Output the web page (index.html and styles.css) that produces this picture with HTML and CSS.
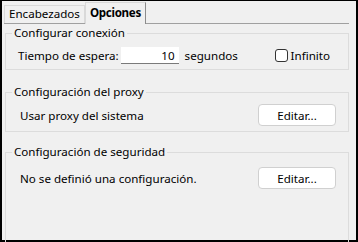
FILE: index.html
```html
<!DOCTYPE html>
<html lang="es">
<head>
    <meta charset="UTF-8">
    <title>Opciones</title>
    <link rel="stylesheet" href="styles.css">
</head>
<body>
    <div class="window">
        <div class="tabs">
            <div class="tab">Encabezados</div>
            <div class="tab active">Opciones</div>
        </div>

        <div class="panel">
            <fieldset class="group group-conn">
                <legend>Configurar conexión</legend>
                <div class="row">
                    <label for="timeout">Tiempo de espera:</label>
                    <input type="text" id="timeout" class="num" value="10">
                    <span class="unit">segundos</span>
                    <label class="check">
                        <span class="box"></span>
                        Infinito
                    </label>
                </div>
            </fieldset>

            <fieldset class="group group-proxy">
                <legend>Configuración del proxy</legend>
                <div class="row">
                    <span class="text">Usar proxy del sistema</span>
                    <button class="btn">Editar...</button>
                </div>
            </fieldset>

            <fieldset class="group group-sec">
                <legend>Configuración de seguridad</legend>
                <div class="row">
                    <span class="text">No se definió una configuración.</span>
                    <button class="btn">Editar...</button>
                </div>
            </fieldset>
        </div>
    </div>
</body>
</html>
```

FILE: styles.css
```css
* {
    margin: 0;
    padding: 0;
    box-sizing: border-box;
}

body {
    font-family: "Noto Sans", "Open Sans", sans-serif;
    font-size: 11.6px;
    color: #000;
    background: #000;
}

.window {
    width: 358px;
    height: 242px;
    background: #f0f0f0;
    border-top: 1px solid #000;
    border-left: 2px solid #000;
    border-right: 2px solid #000;
    border-bottom: 2px solid #000;
    padding: 2px 7px 0 2px;
}

/* tab strip */
.tabs {
    display: flex;
    align-items: flex-end;
    height: 21px;
    border-bottom: 1px solid #a0a0a0;
}

.tab {
    height: 18px;
    padding: 0 4px;
    line-height: 16px;
    border: 1px solid #d9d9d9;
    border-bottom: none;
    color: #000;
}

.tab.active {
    height: 22px;
    margin-bottom: -1px;
    padding: 0 4px;
    line-height: 20px;
    font-weight: bold;
    letter-spacing: -0.3px;
    background: #f0f0f0;
    border-color: #d9d9d9 #8c8c8c #d9d9d9 #d9d9d9;
}

/* group boxes */
.panel {
    padding: 1px 0 0 1px;
}

.group {
    border: 1px solid #dcdcdc;
    padding: 0 12px 0 6px;
}

.group legend {
    padding: 0 2px;
    line-height: 16px;
}

.row {
    display: flex;
    align-items: center;
}

.group-conn {
    height: 45px;
}

.group-conn .row {
    padding: 6px 0 0 6px;
}

.group-proxy {
    height: 48px;
    margin-top: 14px;
}

.group-sec {
    height: 100px;
    margin-top: 12px;
}

.group-proxy .row {
    padding: 4px 0 0 8px;
}

.group-sec .row {
    padding: 7px 0 0 8px;
}

.num {
    width: 58px;
    height: 17px;
    margin-left: 2px;
    padding: 0 4px;
    border: none;
    border-bottom: 1px solid #7a7a7a;
    background: #fff;
    font: inherit;
    text-align: right;
}

.unit {
    margin-left: 6px;
}

.check {
    display: flex;
    align-items: center;
    gap: 3px;
    margin-left: auto;
    margin-right: 6px;
}

.box {
    width: 13px;
    height: 13px;
    border: 1px solid #333;
    border-radius: 3px;
    background: #fff;
}

.btn {
    width: 78px;
    height: 22px;
    margin-left: auto;
    background: #fff;
    border: 1px solid #d0d0d0;
    border-radius: 4px;
    font: inherit;
    color: #000;
}
```
